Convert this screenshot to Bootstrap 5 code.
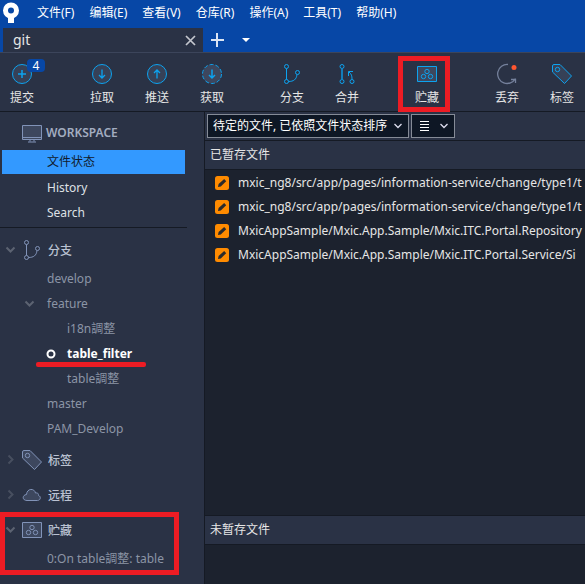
<!DOCTYPE html>
<html lang="zh-CN">
<head>
<meta charset="utf-8">
<meta name="viewport" content="width=device-width, initial-scale=1">
<title>git</title>
<link href="https://cdn.jsdelivr.net/npm/bootstrap@5.3.0/dist/css/bootstrap.min.css" rel="stylesheet">
<style>
:root { --blue:#0747a6; --panel:#2a3245; --deep:#1c222e; --line:#151a24; --red:#ed1c24; --cyan:#0ca3f0; --slate:#8193b8; }
body { background:var(--panel); color:#e6e6e6; font:12px/16px "Noto Sans","Noto Sans CJK SC",sans-serif; }
button, select { font:inherit; color:inherit; }
svg { display:block; flex:none; fill:none; }
.plain { background:none; border:0; padding:0; }
.topbar, .tabstrip { background:var(--blue); }
.topbar { height:28px; padding:0 0 2px 2px; gap:15px; color:#fff; }
.menus { gap:15px; }
.tabstrip { height:24px; padding-left:3px; color:#fff; }
.repo-tab { width:200px; background:var(--panel); padding:0 7px 0 10px; font-size:14px; color:#e6e6e6; }
.tools { height:60px; gap:36px; border-bottom:1px solid var(--line); border-top:1px solid #3c455b; }
.tools .set { gap:11px; }
.tool { width:44px; height:58px; padding-top:10px; gap:5px; color:#e6e6e6; }
.tool svg { stroke:var(--cyan); }
.tool svg.muted { stroke:#75819c; }
.count { background:var(--blue); color:#fff; border-radius:4px; width:18px; height:13px; line-height:13px; left:27px; top:6px; font-size:12px; }
.frame { border:5px solid var(--red); pointer-events:none; }
.frame-tool { inset:3px -1px -1px -7px; }
.frame-stash { inset:1px 25px -4px 0; }
.side { width:205px; flex:none; border-right:1px solid var(--line); color:#8c95a6; }
.side a { color:inherit; text-decoration:none; }
.side svg { stroke:var(--slate); }
.side .chev { stroke:#5c6372; }
.side ul { list-style:none; margin:0; padding:0; }
.head { height:35px; color:#bac2d2; font-weight:500; font-size:12px; line-height:16px; margin:0; padding:2px 0 0 5px; gap:6px; font-family:"Noto Sans CJK SC",sans-serif; }
.side .ws { padding:4px 0 0 22px; gap:4px; height:38px; font:600 12px/16px "Noto Sans",sans-serif; color:#a3adc0; }
.leaf { height:25px; padding-left:47px; }
.leaf.sub { padding-left:67px; }
.side .pages { padding:0 2px 2px; border-bottom:1px solid var(--line); width:187px; margin-bottom:3px; }
.pages .leaf { padding-left:45px; color:#dfe1e5; }
.pages .chosen { background:#3399ff; color:#111b2c; height:24px; margin-bottom:1px; }
.fold { left:24px; }
.dot { left:46px; }
.under { left:36px; bottom:-1px; width:110px; height:5px; border-radius:2px; background:var(--red); }
.work { min-width:0; }
.filters { height:29px; padding:2px; gap:2px; border-bottom:1px solid var(--line); }
.drop { background-color:#0e1725; border:1px solid #858b97; height:24px; color:#fff; }
.drop select { background:transparent; border:0; appearance:none; width:200px; height:22px; padding:0 20px 0 5px; outline:0; }
.drop select option { background:#0e1725; }
.drop .arrow { right:6px; pointer-events:none; }
.view { width:44px; padding:0 5px 0 8px; }
.group-title { height:28px; padding-left:5px; margin:0; font-size:12px; line-height:16px; font-weight:400; }
.files { background:var(--deep); border-top:1px solid var(--line); padding-top:1px; margin:0; list-style:none; }
.files.staged { border-bottom:1px solid var(--line); }
.files li { height:24px; padding-left:10px; gap:9px; white-space:nowrap; }
.files.rest { height:40px; }
</style>
<script src="https://cdn.jsdelivr.net/npm/bootstrap@5.3.0/dist/js/bootstrap.bundle.min.js"></script>
</head>
<body class="d-flex flex-column min-vh-100 overflow-hidden">
<header>
  <nav class="topbar d-flex align-items-center">
    <svg width="20" height="24" viewBox="0 0 20 24"><circle cx="9" cy="9.500" r="5.500" stroke="#fff" stroke-width="5"/><path d="M6 14h6v8H6z" fill="#fff"/></svg>
    <div class="menus d-flex">
      <button class="plain">文件(F)</button><button class="plain">编辑(E)</button><button class="plain">查看(V)</button><button class="plain">仓库(R)</button><button class="plain">操作(A)</button><button class="plain">工具(T)</button><button class="plain">帮助(H)</button>
    </div>
  </nav>
  <div class="tabstrip d-flex align-items-stretch">
    <div class="repo-tab d-flex align-items-center justify-content-between"><span>git</span>
      <button class="plain" aria-label="关闭"><svg width="11" height="11" viewBox="0 0 11 11"><path d="M1 1l9 9M10 1l-9 9" stroke="#c4c7ce" stroke-width="1.700"/></svg></button></div>
    <button class="plain ms-2" aria-label="新建"><svg width="14" height="14" viewBox="0 0 14 14"><path d="M6 0v14M-1 7h14" stroke="#dbe5f4" stroke-width="2"/></svg></button>
    <button class="plain ms-3" aria-label="更多"><svg width="9" height="5" viewBox="0 0 9 5"><path d="M1 0h8L5 4z" fill="#fff"/></svg></button>
  </div>
  <div class="tools d-flex">
    <div class="set d-flex">
      <button class="tool plain position-relative d-flex flex-column align-items-center"><svg width="22" height="22" viewBox="0 0 22 22"><circle cx="11" cy="11" r="9.500" fill="#364157"/><path d="M11 7v8M7 11h8" stroke-width="1.500"/></svg>提交<span class="count position-absolute">4</span></button>
    </div>
    <div class="set d-flex">
      <button class="tool plain d-flex flex-column align-items-center"><svg width="22" height="22" viewBox="0 0 22 22"><circle cx="11" cy="11" r="9.500" fill="#364157"/><path d="M11 6.500v8M8 12l3 3 3-3" stroke-width="1.300"/></svg>拉取</button>
      <button class="tool plain d-flex flex-column align-items-center"><svg width="22" height="22" viewBox="0 0 22 22"><circle cx="11" cy="11" r="9.500" fill="#364157"/><path d="M11 15.500v-8M8 10l3-3 3 3" stroke-width="1.300"/></svg>推送</button>
      <button class="tool plain d-flex flex-column align-items-center"><svg width="22" height="22" viewBox="0 0 22 22"><circle cx="11" cy="11" r="9.500" fill="#3d475e" stroke-dasharray="4 2"/><path d="M11 6.500v8M8 12l3 3 3-3" stroke-width="1.500"/></svg>获取</button>
    </div>
    <div class="set d-flex">
      <button class="tool plain d-flex flex-column align-items-center"><svg width="22" height="22" viewBox="0 0 22 22"><circle cx="5.500" cy="3.500" r="2"/><circle cx="5.500" cy="18.500" r="2"/><circle cx="16.500" cy="9.500" r="2"/><path d="M5.500 5.500v11M7.500 18.500c5 0 8-2 8.500-7"/></svg>分支</button>
      <button class="tool plain d-flex flex-column align-items-center"><svg width="22" height="22" viewBox="0 0 22 22"><circle cx="6" cy="3.500" r="2"/><circle cx="6" cy="18.500" r="2"/><circle cx="16" cy="18.500" r="2"/><path d="M6 5.500v11" stroke="#137cb9" stroke-width="2"/><path d="M16 16c0-3-.5-5-3-7M12.500 13V8.500H17"/></svg>合并</button>
    </div>
    <div class="set d-flex">
      <button class="tool plain position-relative d-flex flex-column align-items-center"><svg width="22" height="22" viewBox="0 0 22 22"><path d="M1.500 3.500h19v15h-19z" fill="#3d475e"/><circle cx="11" cy="8.500" r="2.200"/><circle cx="7.500" cy="13.500" r="2.200"/><circle cx="14.500" cy="13.500" r="2.200"/></svg>贮藏<span class="frame frame-tool position-absolute"></span></button>
    </div>
    <div class="set d-flex">
      <button class="tool plain d-flex flex-column align-items-center"><svg class="muted" width="22" height="22" viewBox="0 0 22 22"><path d="M12 1.500A9.500 9.500 0 1 0 19.500 15.500M15 16.500h4.500V20" stroke-width="1.300"/><circle cx="18" cy="4.500" r="2.500" fill="#ff5630" stroke="none"/></svg>丢弃</button>
      <button class="tool plain d-flex flex-column align-items-center"><svg width="22" height="22" viewBox="0 0 22 22"><path d="M1.500 3Q1.500 1.500 3 1.500L9 1.500 20.500 13 13.500 20.500 1.500 9z" fill="#364157"/><circle cx="6.500" cy="6.500" r="2.200"/></svg>标签</button>
    </div>
  </div>
</header>
<main class="d-flex flex-grow-1">
  <aside class="side">
    <h2 class="head ws d-flex align-items-center"><svg width="20" height="19" viewBox="0 0 20 19"><path d="M.5 1.500h19v14H.5z" fill="#3d475e"/><path d="M1 13.500h18M8 15.500v2M12 15.500v2M6 18h8"/></svg>WORKSPACE</h2>
    <ul class="pages">
      <li class="leaf chosen d-flex align-items-center"><a href="#">文件状态</a></li>
      <li class="leaf d-flex align-items-center"><a href="#">History</a></li>
      <li class="leaf d-flex align-items-center"><a href="#">Search</a></li>
    </ul>
    <section>
      <h2 class="head d-flex align-items-center"><svg class="chev" width="11" height="11" viewBox="0 0 11 11"><path d="M1.500 3.500l4 4 4-4" stroke-width="2"/></svg><svg width="20" height="22" viewBox="0 0 20 22"><circle cx="4.500" cy="3.500" r="2"/><circle cx="4.500" cy="18.500" r="2"/><circle cx="15.500" cy="9.500" r="2"/><path d="M4.500 5.500v11M6.500 18.500c5 0 8-2 8.500-7"/></svg>分支</h2>
      <ul>
        <li class="leaf d-flex align-items-center"><a href="#">develop</a></li>
        <li class="leaf position-relative d-flex align-items-center"><svg class="chev fold position-absolute" width="11" height="11" viewBox="0 0 11 11"><path d="M1.500 3.500l4 4 4-4" stroke-width="2"/></svg><a href="#">feature</a></li>
        <li class="leaf sub d-flex align-items-center"><a href="#">i18n調整</a></li>
        <li class="leaf sub position-relative d-flex align-items-center fw-bold text-white"><svg class="dot position-absolute" width="10" height="10" viewBox="0 0 10 10"><circle cx="5" cy="5" r="3.500" stroke="#fff" stroke-width="2"/></svg><a href="#">table_filter</a><span class="under position-absolute"></span></li>
        <li class="leaf sub d-flex align-items-center"><a href="#">table調整</a></li>
        <li class="leaf d-flex align-items-center"><a href="#">master</a></li>
        <li class="leaf d-flex align-items-center"><a href="#">PAM_Develop</a></li>
      </ul>
    </section>
    <h2 class="head d-flex align-items-center"><svg class="chev" width="11" height="11" viewBox="0 0 11 11"><path d="M3.500 1.500l4 4-4 4" stroke-width="2" opacity=".6"/></svg><svg width="20" height="20" viewBox="0 0 20 20"><path d="M.5 2Q.5.5 2 .5L8 .5 19.500 12 12.500 19.500.5 8z" fill="#3d475e"/><circle cx="5.500" cy="5.500" r="2.200"/></svg>标签</h2>
    <h2 class="head d-flex align-items-center"><svg class="chev" width="11" height="11" viewBox="0 0 11 11"><path d="M3.500 1.500l4 4-4 4" stroke-width="2" opacity=".6"/></svg><svg width="20" height="14" viewBox="0 0 20 14"><path d="M5 12.500C0 12.500 0 7 4.500 6.500 5 0 12.500 0 13.500 5c3-.5 3 1.500 3 2.500 3 1 2 5-1 5z" fill="#3d475e"/></svg>远程</h2>
    <section class="position-relative">
      <h2 class="head d-flex align-items-center"><svg class="chev" width="11" height="11" viewBox="0 0 11 11"><path d="M1.500 3.500l4 4 4-4" stroke-width="2"/></svg><svg width="20" height="16" viewBox="0 0 20 16"><path d="M.5.5h19v15H.5z" fill="#3d475e"/><circle cx="10" cy="5.500" r="2.200"/><circle cx="6.500" cy="10.500" r="2.200"/><circle cx="13.500" cy="10.500" r="2.200"/></svg>贮藏</h2>
      <ul><li class="leaf d-flex align-items-center"><a href="#">0:On table調整: table</a></li></ul>
      <span class="frame frame-stash position-absolute"></span>
    </section>
  </aside>
  <div class="work d-flex flex-column flex-grow-1 overflow-hidden">
    <div class="filters d-flex">
      <div class="drop position-relative d-flex align-items-center"><select aria-label="文件排序"><option>待定的文件, 已依照文件状态排序</option></select><svg class="arrow position-absolute" width="8" height="6" viewBox="0 0 8 6"><path d="M.5 1L4 4.500 7.500 1" stroke="#dde" stroke-width="1.300"/></svg></div>
      <button class="drop view d-flex align-items-center justify-content-between" aria-label="视图"><svg width="9" height="11" viewBox="0 0 9 11"><path d="M0 .5h9M0 3.500h9M0 6.500h9M0 9.500h9" stroke="#fff"/></svg><svg width="10" height="6" viewBox="0 0 10 6"><path d="M1.500 1L5 4.500 8.500 1" stroke="#dde" stroke-width="1.300"/></svg></button>
    </div>
    <h3 class="group-title d-flex align-items-center">已暂存文件</h3>
    <ul class="files staged flex-grow-1 ps-0">
      <li class="d-flex align-items-center"><svg width="14" height="14" viewBox="0 0 14 14"><rect width="14" height="14" rx="2.500" fill="#ff8b00"/><path d="M3 11l.6-3 5.600-5 2 2.200L5.800 10.400z" fill="#2b2a2b"/></svg>mxic_ng8/src/app/pages/information-service/change/type1/t</li>
      <li class="d-flex align-items-center"><svg width="14" height="14" viewBox="0 0 14 14"><rect width="14" height="14" rx="2.500" fill="#ff8b00"/><path d="M3 11l.6-3 5.600-5 2 2.200L5.800 10.400z" fill="#2b2a2b"/></svg>mxic_ng8/src/app/pages/information-service/change/type1/t</li>
      <li class="d-flex align-items-center"><svg width="14" height="14" viewBox="0 0 14 14"><rect width="14" height="14" rx="2.500" fill="#ff8b00"/><path d="M3 11l.6-3 5.600-5 2 2.200L5.800 10.400z" fill="#2b2a2b"/></svg>MxicAppSample/Mxic.App.Sample/Mxic.ITC.Portal.Repository</li>
      <li class="d-flex align-items-center"><svg width="14" height="14" viewBox="0 0 14 14"><rect width="14" height="14" rx="2.500" fill="#ff8b00"/><path d="M3 11l.6-3 5.600-5 2 2.200L5.800 10.400z" fill="#2b2a2b"/></svg>MxicAppSample/Mxic.App.Sample/Mxic.ITC.Portal.Service/Si</li>
    </ul>
    <h3 class="group-title d-flex align-items-center">未暂存文件</h3>
    <div class="files rest"></div>
  </div>
</main>
</body>
</html>
